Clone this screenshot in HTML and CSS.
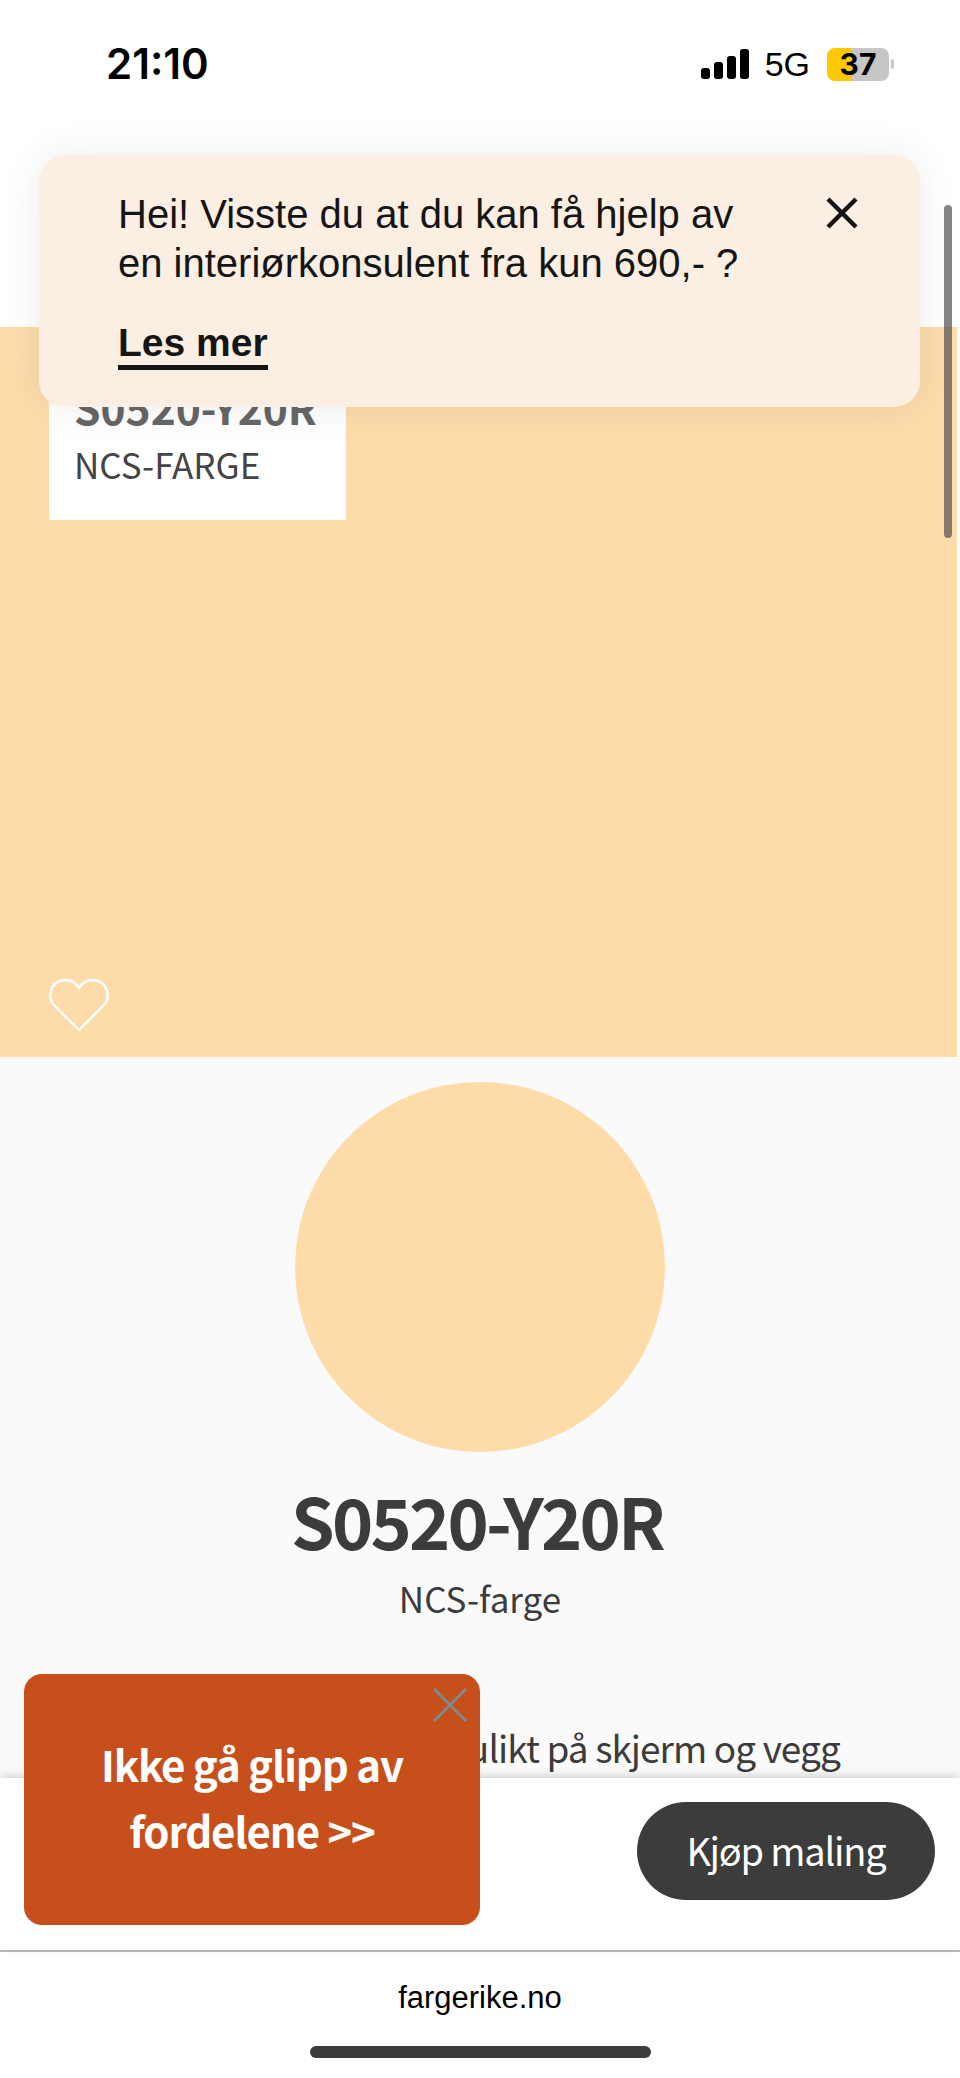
FILE: index.html
```html
<!DOCTYPE html>
<html lang="no">
<head>
    <meta charset="UTF-8">
    <meta name="viewport" content="width=device-width, initial-scale=1.0">
    <title>S0520-Y20R</title>
    <link rel="stylesheet" href="styles.css">
</head>
<body>
    <div class="phone">
        <div class="status-bar">
            <span class="time">21:10</span>
            <div class="status-icons">
                <svg class="signal" width="48" height="32" viewBox="0 0 48 32">
                    <rect x="0" y="20" width="9" height="11" rx="3"/>
                    <rect x="13" y="14" width="9" height="17" rx="3"/>
                    <rect x="26" y="8" width="9" height="23" rx="3"/>
                    <rect x="39" y="1" width="9" height="30" rx="3"/>
                </svg>
                <span class="network">5G</span>
                <div class="battery"><span>37</span></div>
                <div class="battery-tip"></div>
            </div>
        </div>

        <div class="content">
            <div class="hero">
                <div class="hero-label">
                    <div class="hero-code">S0520-Y20R</div>
                    <div class="hero-type">NCS-FARGE</div>
                </div>
                <svg class="heart" width="62" height="56" viewBox="0 0 62 56">
                    <path d="M31 53 L6 28 C-1 20 2 4 17 3 C23 3 28 6 31 11 C34 6 39 3 45 3 C60 4 63 20 56 28 Z" fill="none" stroke="#fff" stroke-width="2.4" stroke-linejoin="round"/>
                </svg>
            </div>

            <div class="details">
                <div class="circle"></div>
                <h1>S0520-Y20R</h1>
                <div class="type">NCS-farge</div>
                <p class="note">ulikt på skjerm og vegg</p>
            </div>
        </div>

        <div class="buy-bar">
            <button class="buy-button">Kjøp maling</button>
        </div>

        <div class="browser-bar">
            <span class="url">fargerike.no</span>
            <div class="home-bar"></div>
        </div>

        <div class="banner">
            <div class="banner-top">
                <p>Hei! Visste du at du kan få hjelp av<br>en interiørkonsulent fra kun 690,- ?</p>
                <svg class="banner-close" width="32" height="32" viewBox="0 0 32 32">
                    <path d="M2 2 L30 30 M30 2 L2 30" stroke="#151515" stroke-width="4.5"/>
                </svg>
            </div>
            <a class="banner-link" href="#">Les mer</a>
        </div>

        <div class="promo">
            <svg class="promo-close" width="34" height="34" viewBox="0 0 34 34">
                <path d="M1 1 L33 33 M33 1 L1 33" stroke="#7f8a8c" stroke-width="3"/>
            </svg>
            <div>Ikke gå glipp av</div>
            <div>fordelene &gt;&gt;</div>
        </div>

        <div class="scrollbar"></div>
    </div>
</body>
</html>
```

FILE: styles.css
```css
body {
    margin: 0;
    background-color: #fff;
}

.phone {
    position: relative;
    width: 960px;
    height: 2078px;
    overflow: hidden;
    display: flex;
    flex-direction: column;
    font-family: "Noto Sans CJK JP", "Noto Sans", sans-serif;
    color: #3c3c3c;
}

.status-bar {
    height: 118px;
    flex-shrink: 0;
    display: flex;
    justify-content: space-between;
    align-items: flex-start;
    padding: 40px 66px 0 106px;
    box-sizing: border-box;
    font-family: Inter, sans-serif;
    color: #000;
}

.time {
    font-size: 42px;
    font-weight: 600;
    line-height: 48px;
}

.status-icons {
    display: flex;
    align-items: center;
    height: 48px;
}

.signal {
    margin-right: 16px;
}

.network {
    font-family: "Liberation Sans", sans-serif;
    font-size: 34px;
    margin-right: 17px;
}

.battery {
    width: 62px;
    height: 33px;
    border-radius: 8px;
    background: linear-gradient(90deg, #fcc800 0, #fcc800 40%, #c6c6c6 40%);
    text-align: center;
    font-size: 30px;
    font-weight: 700;
    line-height: 33px;
    font-family: Inter, sans-serif;
}

.battery-tip {
    width: 3px;
    height: 10px;
    margin-left: 2px;
    border-radius: 0 3px 3px 0;
    background-color: #c6c6c6;
}

.content {
    flex: 1;
    overflow: hidden;
    background-color: #fafafa;
    margin-top: 209px;
}

.hero {
    position: relative;
    width: 957px;
    height: 730px;
    background-color: #fddcaa;
}

.hero-label {
    width: 297px;
    height: 193px;
    margin-left: 49px;
    padding: 55px 0 0 25px;
    box-sizing: border-box;
    background-color: #fff;
}

.hero-code {
    font-size: 42.5px;
    font-weight: 700;
    line-height: 50px;
    color: #666;
}

.hero-type {
    font-size: 35px;
    line-height: 64px;
    color: #444;
}

.heart {
    position: absolute;
    left: 48px;
    top: 650px;
}

.details {
    text-align: center;
    padding-top: 25px;
}

.circle {
    width: 370px;
    height: 370px;
    margin: 0 auto;
    border-radius: 50%;
    background-color: #fddcaa;
}

.details h1 {
    margin: 23px 6px 0 0;
    font-size: 70px;
    font-weight: 700;
    line-height: 90px;
    letter-spacing: -2.8px;
}

.type {
    margin-top: 3px;
    font-size: 35px;
    line-height: 60px;
}

.note {
    margin: 89px 0 0;
    padding-right: 120px;
    font-size: 37px;
    line-height: 60px;
    letter-spacing: -0.9px;
    text-align: right;
    white-space: nowrap;
}

.buy-bar {
    height: 172px;
    flex-shrink: 0;
    padding: 24px 25px 0 0;
    box-sizing: border-box;
    display: flex;
    justify-content: flex-end;
    align-items: flex-start;
    background-color: #fff;
    box-shadow: 0 -3px 8px rgba(0, 0, 0, 0.15);
    position: relative;
}

.buy-button {
    width: 298px;
    height: 98px;
    padding: 0 0 4px;
    border: none;
    border-radius: 49px;
    background-color: #3c3c3c;
    color: #fff;
    font-family: inherit;
    font-size: 38px;
    letter-spacing: -1.2px;
}

.browser-bar {
    height: 128px;
    flex-shrink: 0;
    box-sizing: border-box;
    border-top: 2px solid #bbb;
    background-color: #fff;
    display: flex;
    flex-direction: column;
    align-items: center;
    padding-top: 28px;
}

.url {
    font-family: "Liberation Sans", sans-serif;
    font-size: 31px;
    line-height: 36px;
    color: #000;
}

.home-bar {
    width: 341px;
    height: 12px;
    margin-top: 30px;
    border-radius: 6px;
    background-color: #3c3c3c;
}

.banner {
    position: absolute;
    left: 39px;
    top: 155px;
    width: 881px;
    height: 252px;
    padding: 35px 62px 0 79px;
    box-sizing: border-box;
    border-radius: 26px;
    background-color: #fbeee3;
    box-shadow: 0 0 40px rgba(0, 0, 0, 0.08);
    font-family: "Liberation Sans", sans-serif;
    color: #151515;
}

.banner-top {
    display: flex;
    justify-content: space-between;
    align-items: flex-start;
}

.banner-top p {
    margin: 0;
    font-size: 40px;
    line-height: 49px;
}

.banner-close {
    margin-top: 7px;
}

.banner-link {
    display: inline-block;
    margin-top: 33px;
    font-size: 39px;
    font-weight: 700;
    line-height: 44px;
    color: #151515;
    text-decoration: none;
    border-bottom: 5px solid #151515;
}

.promo {
    position: absolute;
    left: 24px;
    top: 1674px;
    width: 456px;
    height: 251px;
    padding-top: 57px;
    box-sizing: border-box;
    border-radius: 18px;
    background-color: #c64f1b;
    color: #fff;
    font-size: 42px;
    font-weight: 700;
    line-height: 66px;
    letter-spacing: -1.1px;
    text-align: center;
}

.promo-close {
    position: absolute;
    right: 13px;
    top: 14px;
}

.scrollbar {
    position: absolute;
    left: 944px;
    top: 205px;
    width: 8px;
    height: 333px;
    border-radius: 4px;
    background-color: rgba(80, 80, 80, 0.7);
}
```
